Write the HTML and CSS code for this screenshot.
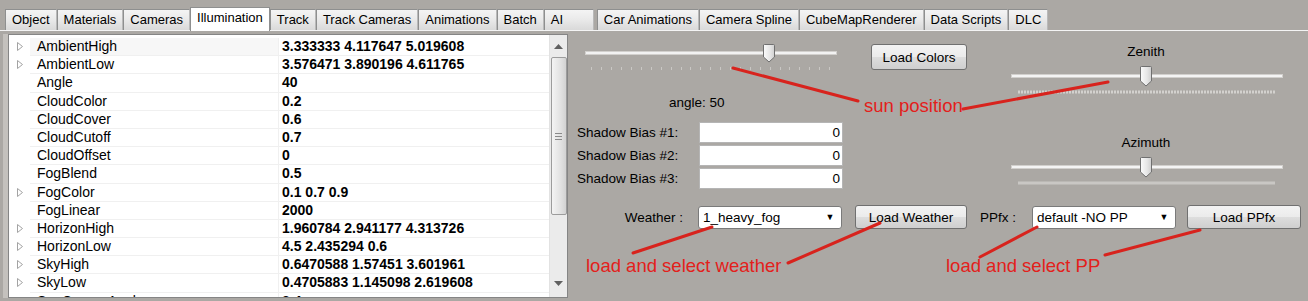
FILE: index.html
```html
<!DOCTYPE html>
<html lang="en">
<head>
  <meta charset="UTF-8">
  <title>Illumination</title>
  <link rel="stylesheet" href="styles.css">
</head>
<body>

<svg class="defs" width="0" height="0">
  <defs>
    <linearGradient id="thumbGrad" x1="0" y1="0" x2="1" y2="0">
      <stop offset="0" stop-color="#fbfbfb"/>
      <stop offset="0.6" stop-color="#e6e6e6"/>
      <stop offset="1" stop-color="#cfcfcf"/>
    </linearGradient>
  </defs>
</svg>

<!-- Tabs -->
<div class="tabs">
  <div class="tab">Object</div>
  <div class="tab">Materials</div>
  <div class="tab">Cameras</div>
  <div class="tab active">Illumination</div>
  <div class="tab">Track</div>
  <div class="tab">Track Cameras</div>
  <div class="tab">Animations</div>
  <div class="tab">Batch</div>
  <div class="tab tab-ai">AI</div>
  <div class="tab">Car Animations</div>
  <div class="tab">Camera Spline</div>
  <div class="tab">CubeMapRenderer</div>
  <div class="tab">Data Scripts</div>
  <div class="tab">DLC</div>
</div>

<div class="page">

  <!-- Property grid -->
  <div class="grid-frame">
    <div class="grid">
      <div class="rows">
        <div class="row selected"><span class="exp"><svg width="6" height="9"><path d="M0.5 0.5 L5.5 4.5 L0.5 8.5 Z" fill="none" stroke="#a3a3a3"/></svg></span><span class="name">AmbientHigh</span><span class="val">3.333333 4.117647 5.019608</span></div>
        <div class="row"><span class="exp"><svg width="6" height="9"><path d="M0.5 0.5 L5.5 4.5 L0.5 8.5 Z" fill="none" stroke="#a3a3a3"/></svg></span><span class="name">AmbientLow</span><span class="val">3.576471 3.890196 4.611765</span></div>
        <div class="row"><span class="exp"></span><span class="name">Angle</span><span class="val">40</span></div>
        <div class="row"><span class="exp"></span><span class="name">CloudColor</span><span class="val">0.2</span></div>
        <div class="row"><span class="exp"></span><span class="name">CloudCover</span><span class="val">0.6</span></div>
        <div class="row"><span class="exp"></span><span class="name">CloudCutoff</span><span class="val">0.7</span></div>
        <div class="row"><span class="exp"></span><span class="name">CloudOffset</span><span class="val">0</span></div>
        <div class="row"><span class="exp"></span><span class="name">FogBlend</span><span class="val">0.5</span></div>
        <div class="row"><span class="exp"><svg width="6" height="9"><path d="M0.5 0.5 L5.5 4.5 L0.5 8.5 Z" fill="none" stroke="#a3a3a3"/></svg></span><span class="name">FogColor</span><span class="val">0.1 0.7 0.9</span></div>
        <div class="row"><span class="exp"></span><span class="name">FogLinear</span><span class="val">2000</span></div>
        <div class="row"><span class="exp"><svg width="6" height="9"><path d="M0.5 0.5 L5.5 4.5 L0.5 8.5 Z" fill="none" stroke="#a3a3a3"/></svg></span><span class="name">HorizonHigh</span><span class="val">1.960784 2.941177 4.313726</span></div>
        <div class="row"><span class="exp"><svg width="6" height="9"><path d="M0.5 0.5 L5.5 4.5 L0.5 8.5 Z" fill="none" stroke="#a3a3a3"/></svg></span><span class="name">HorizonLow</span><span class="val">4.5 2.435294 0.6</span></div>
        <div class="row"><span class="exp"><svg width="6" height="9"><path d="M0.5 0.5 L5.5 4.5 L0.5 8.5 Z" fill="none" stroke="#a3a3a3"/></svg></span><span class="name">SkyHigh</span><span class="val">0.6470588 1.57451 3.601961</span></div>
        <div class="row"><span class="exp"><svg width="6" height="9"><path d="M0.5 0.5 L5.5 4.5 L0.5 8.5 Z" fill="none" stroke="#a3a3a3"/></svg></span><span class="name">SkyLow</span><span class="val">0.4705883 1.145098 2.619608</span></div>
        <div class="row"><span class="exp"></span><span class="name">SunCoronaAngle</span><span class="val">2.4</span></div>
      </div>
      <div class="scrollbar">
        <div class="arrow"><svg width="9" height="5"><path d="M0 5 L4.5 0 L9 5 Z" fill="#606060"/></svg></div>
        <div class="thumb"><span class="grip"></span></div>
        <div class="arrow arrow-down"><svg width="9" height="5"><path d="M0 0 L4.5 5 L9 0 Z" fill="#606060"/></svg></div>
      </div>
    </div>
  </div>

  <!-- Controls -->
  <div class="controls">
    <div class="top">
      <div class="left-col">
        <div class="line1">
          <svg class="slider-main" width="260" height="32">
            <rect x="4.5" y="9.5" width="251" height="3" fill="#f2f2f2" stroke="#d2d0cd"/>
            <g fill="#c9c7c4">
              <rect x="10" y="25" width="1" height="3"/><rect x="20" y="25" width="1" height="3"/><rect x="30" y="25" width="1" height="3"/><rect x="40" y="25" width="1" height="3"/><rect x="50" y="25" width="1" height="3"/>
              <rect x="60" y="25" width="1" height="3"/><rect x="70" y="25" width="1" height="3"/><rect x="80" y="25" width="1" height="3"/><rect x="90" y="25" width="1" height="3"/><rect x="100" y="25" width="1" height="3"/>
              <rect x="109" y="25" width="1" height="3"/><rect x="119" y="25" width="1" height="3"/><rect x="129" y="25" width="1" height="3"/><rect x="139" y="25" width="1" height="3"/><rect x="149" y="25" width="1" height="3"/>
              <rect x="159" y="25" width="1" height="3"/><rect x="169" y="25" width="1" height="3"/><rect x="179" y="25" width="1" height="3"/><rect x="189" y="25" width="1" height="3"/><rect x="199" y="25" width="1" height="3"/>
              <rect x="208" y="25" width="1" height="3"/><rect x="218" y="25" width="1" height="3"/><rect x="228" y="25" width="1" height="3"/><rect x="238" y="25" width="1" height="3"/><rect x="248" y="25" width="1" height="3"/>
            </g>
            <path d="M182.5 3 Q182.5 2.5 183.5 2.5 H192.5 Q193.5 2.5 193.5 3.5 V15 L188 20 L182.5 15 Z" fill="url(#thumbGrad)" stroke="#707070"/>
          </svg>
          <button class="btn btn-colors">Load Colors</button>
        </div>
        <div class="angle">angle: 50</div>
        <div class="bias">
          <div class="bias-row"><label>Shadow Bias #1:</label><div class="input">0</div></div>
          <div class="bias-row"><label>Shadow Bias #2:</label><div class="input">0</div></div>
          <div class="bias-row"><label>Shadow Bias #3:</label><div class="input">0</div></div>
        </div>
      </div>

      <div class="sun-col">
        <div class="sun-label">Zenith</div>
        <svg class="slider-sun" width="280" height="32">
          <rect x="3.5" y="10.5" width="271" height="3" fill="#f4f4f4" stroke="#d2d0cd"/>
          <line x1="10" y1="28" x2="267" y2="28" stroke="#d3d1ce" stroke-width="3" stroke-dasharray="2 1"/>
          <path d="M132.5 3 Q132.5 2.5 133.5 2.5 H142.5 Q143.5 2.5 143.5 3.5 V17 L138 22 L132.5 17 Z" fill="url(#thumbGrad)" stroke="#707070"/>
        </svg>
        <div class="sun-label sun-label-az">Azimuth</div>
        <svg class="slider-sun" width="280" height="32">
          <rect x="3.5" y="10.5" width="271" height="3" fill="#f4f4f4" stroke="#d2d0cd"/>
          <line x1="10" y1="28" x2="267" y2="28" stroke="#c9c7c4" stroke-width="3"/>
          <path d="M132.5 3 Q132.5 2.5 133.5 2.5 H142.5 Q143.5 2.5 143.5 3.5 V17 L138 22 L132.5 17 Z" fill="url(#thumbGrad)" stroke="#707070"/>
        </svg>
      </div>
    </div>

    <div class="weather">
      <label class="lbl-weather">Weather :</label>
      <div class="select">1_heavy_fog<span class="caret">&#9660;</span></div>
      <button class="btn btn-weather">Load Weather</button>
      <label class="lbl-ppfx">PPfx :</label>
      <div class="select">default -NO PP<span class="caret">&#9660;</span></div>
      <button class="btn btn-ppfx">Load PPfx</button>
    </div>
  </div>
</div>

<!-- Red notes drawn over the screenshot -->
<svg class="notes" width="1308" height="301">
  <g stroke="#d8231d" stroke-width="3" stroke-linecap="round">
    <line x1="733" y1="68" x2="858" y2="101"/>
    <line x1="963" y1="109" x2="1108" y2="82"/>
    <line x1="633" y1="253" x2="712" y2="227"/>
    <line x1="788" y1="263" x2="880" y2="223"/>
    <line x1="980" y1="257" x2="1037" y2="227"/>
    <line x1="1105" y1="255" x2="1200" y2="230"/>
  </g>
</svg>
<div class="note note-sun">sun position</div>
<div class="note note-weather">load and select weather</div>
<div class="note note-pp">load and select PP</div>

</body>
</html>
```

FILE: styles.css
```css
body {
  margin: 0;
  width: 1308px;
  height: 301px;
  overflow: hidden;
  position: relative;
  background: #aba8a4;
  font-family: 'Liberation Sans', Arial, sans-serif;
  font-size: 13.5px;
  color: #000;
}

.defs {
  position: absolute;
}

/* tabs */
.tabs {
  display: flex;
  align-items: flex-end;
  height: 30px;
  padding-left: 5px;
  border-bottom: 1px solid #f4f4f4;
}

.tab {
  height: 20px;
  line-height: 20px;
  padding: 0 6px;
  font-size: 13px;
  border: 1px solid #8e8f8f;
  border-bottom: none;
  border-right-color: #b9b9b9;
  background: linear-gradient(#f4f4f4, #e9e9e9 50%, #d9d9d9);
}

.tab.active {
  height: 23px;
  line-height: 20px;
  margin-bottom: -1px;
  background: #fff;
  border-color: #8e8f8f;
}

.tab-ai {
  width: 36px;
  margin-right: 3px;
}

/* property grid */
.page {
  display: flex;
}

.grid-frame {
  margin: 3px 0 0 8px;
  width: 558px;
  height: 262px;
  border: 1px solid #858585;
  box-shadow: -5px 0 0 #c4c1bd;
  background: #fff;
}

.grid {
  display: flex;
  height: 100%;
  overflow: hidden;
}

.rows {
  flex: 1;
  padding-top: 3px;
}

.row {
  display: flex;
  height: 18.2px;
  line-height: 17px;
  font-size: 14px;
}

.exp {
  width: 21px;
  display: flex;
  justify-content: center;
  padding-top: 4px;
  box-sizing: border-box;
}

.name {
  width: 241px;
  padding-left: 7px;
  border-bottom: 1px solid #f0f0f0;
  border-right: 1px solid #f0f0f0;
}

.row.selected .name {
  background: #f7f7f7;
}

.val {
  flex: 1;
  padding-left: 3px;
  font-weight: bold;
  border-bottom: 1px solid #f0f0f0;
}

.scrollbar {
  width: 17px;
  background: #ebebeb;
  display: flex;
  flex-direction: column;
  align-items: center;
  border-left: 1px solid #e2e2e2;
}

.arrow {
  height: 22px;
  display: flex;
  align-items: center;
  justify-content: center;
}

.arrow-down {
  margin-top: auto;
  height: 28px;
}

.thumb {
  width: 14px;
  height: 156px;
  border: 1px solid #9c9c9c;
  border-radius: 2px;
  background: linear-gradient(90deg, #f4f4f4, #e2e2e2 60%, #d2d2d2);
  display: flex;
  align-items: center;
  justify-content: center;
}

.grip {
  width: 7px;
  height: 5px;
  border-top: 1px solid #8a8a8a;
  border-bottom: 1px solid #8a8a8a;
  background: linear-gradient(#8a8a8a, #8a8a8a) center / 7px 1px no-repeat;
}

/* controls */
.controls {
  flex: 1;
  padding-left: 1px;
}

.top {
  display: flex;
}

.left-col {
  width: 439px;
}

.line1 {
  display: flex;
  align-items: flex-start;
  margin-top: 11px;
}

.slider-main {
  margin-left: 12px;
}

.btn {
  font-family: inherit;
  font-size: 13.5px;
  color: #000;
  height: 26px;
  padding: 0;
  border: 1px solid #707070;
  border-radius: 3px;
  background: linear-gradient(#f3f3f3, #ebebeb 50%, #dddddd 51%, #cfcfcf);
}

.btn-colors {
  width: 96px;
  margin: 2px 0 0 30px;
}

.angle {
  margin: 21px 0 0 100px;
  line-height: 16px;
}

.bias {
  margin: 11px 0 0 8px;
}

.bias-row {
  display: flex;
  align-items: center;
  margin-bottom: 2px;
}

.bias-row label {
  width: 122px;
}

.input {
  width: 140px;
  height: 19px;
  line-height: 19px;
  padding-right: 2px;
  text-align: right;
  background: #fff;
  border: 1px solid #b5b5b5;
}

.sun-col {
  width: 280px;
  padding-top: 13px;
}

.sun-label {
  width: 276px;
  text-align: center;
  line-height: 16px;
}

.slider-sun {
  display: block;
  margin-top: 4px;
}

.sun-label-az {
  margin-top: 39px;
}

.weather {
  display: flex;
  align-items: center;
  height: 24px;
  margin-top: 14px;
}

.weather label {
  text-align: right;
  box-sizing: border-box;
}

.lbl-weather {
  width: 129px;
  padding-right: 15px;
}

.lbl-ppfx {
  width: 65px;
  padding-right: 16px;
}

.select {
  width: 144px;
  height: 23px;
  line-height: 21px;
  box-sizing: border-box;
  padding-left: 4px;
  background: #fff;
  border: 1px solid #7a7a7a;
  border-radius: 3px;
  display: flex;
}

.caret {
  margin-left: auto;
  width: 22px;
  font-size: 9px;
  text-align: center;
}

.btn-weather {
  width: 112px;
  height: 24px;
  margin-left: 13px;
}

.btn-ppfx {
  width: 114px;
  height: 24px;
  margin-left: 11px;
}

/* annotations */
.notes {
  position: absolute;
  left: 0;
  top: 0;
}

.note {
  position: absolute;
  color: #e3201b;
  font-size: 18.5px;
  line-height: 20px;
}

.note-sun {
  left: 864px;
  top: 96px;
}

.note-weather {
  left: 586px;
  top: 256px;
}

.note-pp {
  left: 946px;
  top: 256px;
}
```
